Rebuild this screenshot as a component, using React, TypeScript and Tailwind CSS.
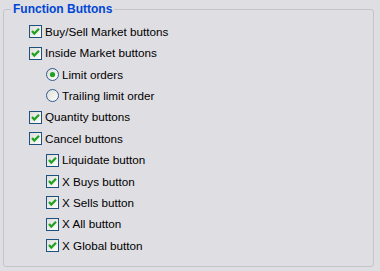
import React from 'react';

type Item = {
  label: string;
  kind: 'check' | 'radio';
  level: 1 | 2;
  checked: boolean;
};

const items: Item[] = [
  { label: 'Buy/Sell Market buttons', kind: 'check', level: 1, checked: true },
  { label: 'Inside Market buttons', kind: 'check', level: 1, checked: true },
  { label: 'Limit orders', kind: 'radio', level: 2, checked: true },
  { label: 'Trailing limit order', kind: 'radio', level: 2, checked: false },
  { label: 'Quantity buttons', kind: 'check', level: 1, checked: true },
  { label: 'Cancel buttons', kind: 'check', level: 1, checked: true },
  { label: 'Liquidate button', kind: 'check', level: 2, checked: true },
  { label: 'X Buys button', kind: 'check', level: 2, checked: true },
  { label: 'X Sells button', kind: 'check', level: 2, checked: true },
  { label: 'X All button', kind: 'check', level: 2, checked: true },
  { label: 'X Global button', kind: 'check', level: 2, checked: true },
];

const CheckBox = ({ checked }: { checked: boolean }) => (
  <svg width="13" height="13" viewBox="0 0 13 13" className="shrink-0">
    <defs>
      <linearGradient id="cbfill" x1="0" y1="0" x2="1" y2="1">
        <stop offset="0" stopColor="#dcdcd7" />
        <stop offset="1" stopColor="#ffffff" />
      </linearGradient>
    </defs>
    <rect x="0.5" y="0.5" width="12" height="12" fill="url(#cbfill)" stroke="#1c5180" />
    {checked && (
      <path d="M3 6 L5.3 8.6 L10 3.8" fill="none" stroke="#21a121" strokeWidth="2.2" />
    )}
  </svg>
);

const Radio = ({ checked }: { checked: boolean }) => (
  <svg width="13" height="13" viewBox="0 0 13 13" className="shrink-0">
    <defs>
      <linearGradient id="rbfill" x1="0" y1="0" x2="1" y2="1">
        <stop offset="0" stopColor="#dcdcd7" />
        <stop offset="1" stopColor="#ffffff" />
      </linearGradient>
    </defs>
    <circle cx="6.5" cy="6.5" r="6" fill="url(#rbfill)" stroke="#2f5a8a" />
    {checked && <circle cx="6.5" cy="6.5" r="2.6" fill="#21a121" />}
  </svg>
);

export default function App() {
  return (
    <div
      className="w-[380px] h-[271px] bg-[#dfdee3] pt-[3px] pl-[3px]"
      style={{ fontFamily: '"Liberation Sans", Arial, sans-serif' }}
    >
      <fieldset className="w-[371px] h-[264px] border border-[#c5c4c8] rounded-[3px]">
        <legend className="ml-[7px] px-[2px] text-[12px] font-bold text-[#0046d5] leading-[12px]">
          Function Buttons
        </legend>
        <div className="flex flex-col pl-[25px] pt-[6px]">
          {items.map((it) => (
            <div
              key={it.label}
              className={`flex items-center h-[21.4px] gap-[3px] text-[11.7px] text-black ${
                it.level === 2 ? 'pl-[17px]' : ''
              }`}
            >
              {it.kind === 'check' ? <CheckBox checked={it.checked} /> : <Radio checked={it.checked} />}
              <span>{it.label}</span>
            </div>
          ))}
        </div>
      </fieldset>
    </div>
  );
}
